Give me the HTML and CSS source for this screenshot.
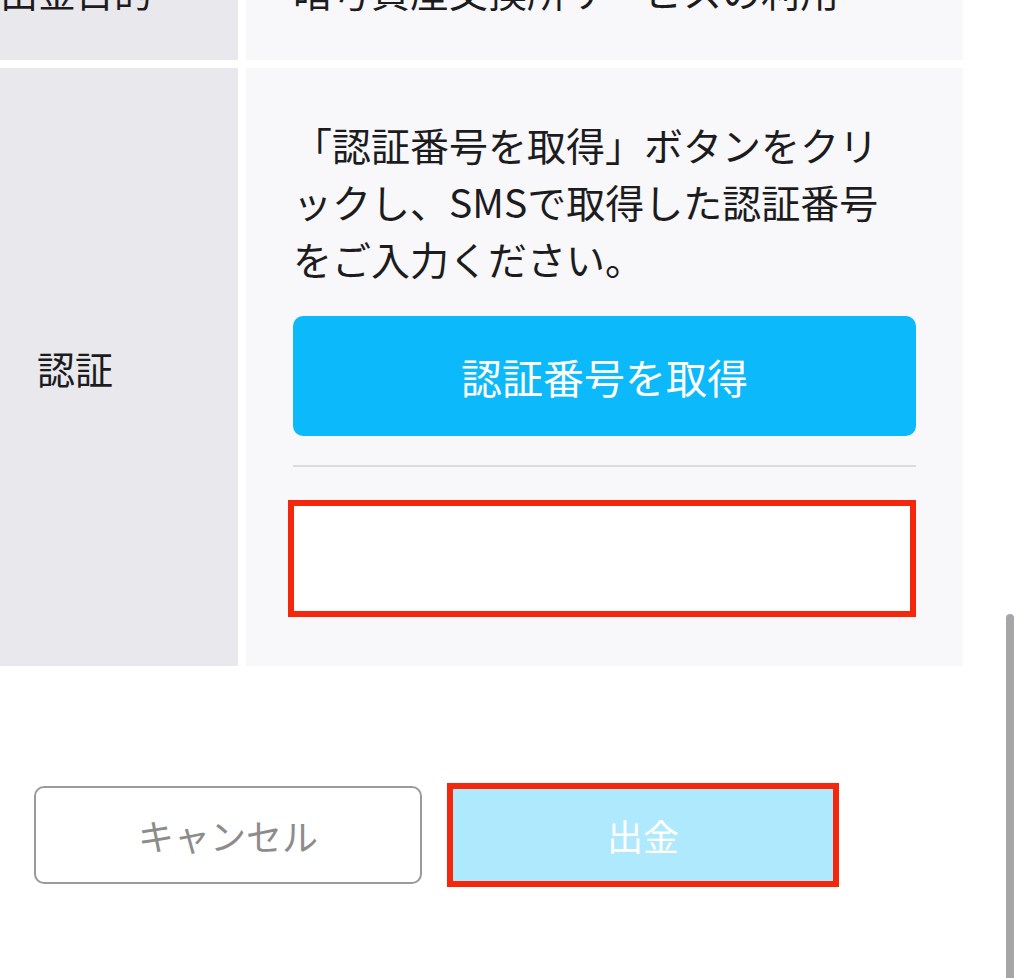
FILE: index.html
```html
<!DOCTYPE html>
<html lang="ja">
<head>
<meta charset="utf-8">
<title>出金</title>
<link rel="stylesheet" href="styles.css">
</head>
<body>
<div class="page">
  <div class="table">
    <div class="label-cell row-first"><span class="label">出金目的</span></div>
    <div class="value-cell row-first"><span class="value">暗号資産交換所サービスの利用</span></div>
    <div class="label-cell row-auth"><span class="label">認証</span></div>
    <div class="value-cell row-auth">
      <p class="note">「認証番号を取得」ボタンをクリックし、SMSで取得した認証番号をご入力ください。</p>
      <button class="btn-code" type="button">認証番号を取得</button>
      <hr class="divider">
      <div class="code-input"></div>
    </div>
  </div>
  <div class="actions">
    <button class="btn-cancel" type="button">キャンセル</button>
    <button class="btn-submit" type="button">出金</button>
  </div>
  <div class="scrollbar"></div>
</div>
</body>
</html>
```
FILE: styles.css
```css
* { box-sizing: border-box; }
html, body {
  margin: 0;
  padding: 0;
  background: #ffffff;
}
body {
  font-family: "Noto Sans CJK JP", "Noto Sans", sans-serif;
  color: #1c1c1e;
}
.page {
  position: relative;
  width: 1024px;
  height: 978px;
  overflow: hidden;
  background: #ffffff;
}
.table {
  display: grid;
  grid-template-columns: 238px 717px;
  column-gap: 8px;
  row-gap: 8px;
  margin-top: -80px;
}
.label-cell {
  background: #e9e8ec;
  display: flex;
  align-items: center;
}
.label {
  display: block;
  width: 150px;
  text-align: center;
  font-size: 38px;
  white-space: nowrap;
}
.value-cell {
  background: #f8f7fa;
  padding: 0 47px;
}
.row-first {
  height: 140px;
  display: flex;
  align-items: center;
}
.value {
  font-size: 39px;
  white-space: nowrap;
}
.row-auth {
  height: 598px;
}
.value-cell.row-auth {
  padding-top: 48px;
  display: flex;
  flex-direction: column;
}
.note {
  margin: 0;
  font-size: 39px;
  line-height: 57px;
}
.btn-code {
  margin-top: 29px;
  height: 120px;
  width: 100%;
  border: none;
  border-radius: 10px;
  background: #0cb9fa;
  color: #ffffff;
  font-family: inherit;
  font-size: 41px;
}
.divider {
  margin: 29px 0 0;
  border: none;
  height: 2px;
  background: #dcdbe0;
}
.code-input {
  margin-top: 33px;
  margin-left: -5px;
  height: 117px;
  border: 6px solid #f4260c;
  background: #ffffff;
}
.actions {
  display: flex;
  align-items: center;
  gap: 25px;
  padding-left: 34px;
  margin-top: 117px;
}
.btn-cancel {
  width: 388px;
  height: 98px;
  border: 2px solid #9a9a9a;
  border-radius: 10px;
  background: #ffffff;
  color: #8c8c8c;
  font-family: inherit;
  font-size: 36px;
}
.btn-submit {
  width: 392px;
  height: 104px;
  border: 6px solid #f4260c;
  background: #aee9fd;
  color: #ffffff;
  font-family: inherit;
  font-size: 36px;
}
.scrollbar {
  position: absolute;
  left: 1006px;
  top: 614px;
  width: 8px;
  height: 380px;
  border-radius: 4px;
  background: #a6a6a8;
}
```
